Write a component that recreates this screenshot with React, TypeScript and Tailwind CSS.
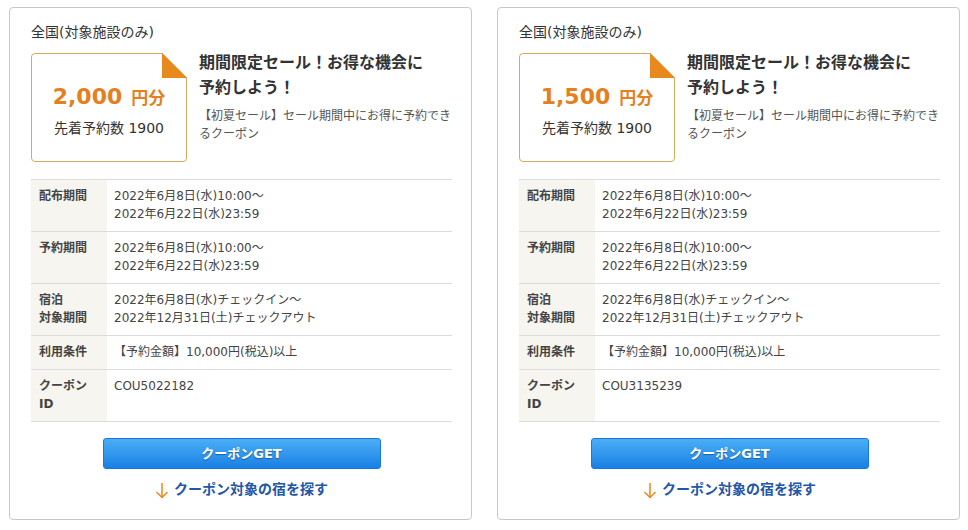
import React from "react";

type Coupon = { amount: string; id: string };

const FONT = { fontFamily: '"DejaVu Sans", "Noto Sans CJK JP", sans-serif' };

function Row({
  label,
  children,
  single,
}: {
  label: React.ReactNode;
  children: React.ReactNode;
  single?: boolean;
}) {
  const lh = single ? "leading-[17px]" : "leading-[17.5px]";
  return (
    <div className="flex border-b border-[#dcdcdc]">
      <div className={`w-[76px] shrink-0 bg-[#f7f5f0] pl-[8px] py-[8px] text-[12px] ${lh} font-bold text-[#444]`}>
        {label}
      </div>
      <div className={`flex-1 pl-[7px] py-[8px] text-[12px] ${lh} text-[#444]`}>{children}</div>
    </div>
  );
}

function Card({ c }: { c: Coupon }) {
  return (
    <div className="w-[463px] h-[513px] border border-[#c8c8c8] rounded-[4px] bg-white pl-[21px] pr-[18px] pt-[15px]">
      <div className="text-[14px] leading-[18px] text-[#333]">全国(対象施設のみ)</div>
      <div className="flex mt-[12px]">
        <div className="relative w-[156px] h-[109px] shrink-0">
          <div
            className="absolute inset-0 border border-[#d9a85a] rounded-[4px] bg-white"
            style={{ clipPath: "polygon(0 0, 131px 0, 156px 25px, 156px 100%, 0 100%)" }}
          />
          <svg className="absolute left-[131px] top-0" width="25" height="25" viewBox="0 0 25 25">
            <polygon points="0,0 0,25 25,25" fill="#e8891e" />
            <line x1="0" y1="0" x2="25" y2="25" stroke="#d9a85a" strokeWidth="1" />
          </svg>
          <div className="relative h-full flex flex-col items-center justify-center pt-[4px]">
            <div className="flex items-baseline text-[#e5801e] font-bold">
              <span className="text-[22px] leading-[28px]">{c.amount}</span>
              <span className="text-[17px] leading-[20px] ml-[9px]">円分</span>
            </div>
            <div className="text-[14px] leading-[18px] text-[#333] mt-[8px]">先着予約数 1900</div>
          </div>
        </div>
        <div className="ml-[12px] -mt-[3px]">
          <div className="text-[16px] leading-[25px] font-bold text-[#333]">
            期間限定セール！お得な機会に
            <br />
            予約しよう！
          </div>
          <div className="mt-[7px] text-[12px] leading-[18px] text-[#555]">
            【初夏セール】セール期間中にお得に予約でき
            <br />
            るクーポン
          </div>
        </div>
      </div>
      <div className="mt-[17px] w-[421px] border-t border-[#dcdcdc]">
        <Row label="配布期間">
          2022年6月8日(水)10:00～
          <br />
          2022年6月22日(水)23:59
        </Row>
        <Row label="予約期間">
          2022年6月8日(水)10:00～
          <br />
          2022年6月22日(水)23:59
        </Row>
        <Row
          label={
            <>
              宿泊
              <br />
              対象期間
            </>
          }
        >
          2022年6月8日(水)チェックイン～
          <br />
          2022年12月31日(土)チェックアウト
        </Row>
        <Row label="利用条件" single>
          【予約金額】10,000円(税込)以上
        </Row>
        <Row
          label={
            <>
              クーポン
              <br />
              ID
            </>
          }
        >
          {c.id}
        </Row>
      </div>
      <div className="w-[421px] flex flex-col items-center">
        <button className="mt-[16px] w-[278px] h-[31px] rounded-[3px] border border-[#1a78d6] bg-gradient-to-b from-[#4aaef6] to-[#1780e4] text-white text-[13px] font-bold [text-shadow:0_1px_1px_rgba(0,0,0,0.35)]">
          クーポンGET
        </button>
        <div className="mt-[9px] flex items-center text-[14px] leading-[20px] font-bold text-[#2356a8]">
          <svg width="14" height="17" viewBox="0 0 14 17" className="mr-[5px] mt-[4px]">
            <path d="M7 1 V15.5" stroke="#e8891e" strokeWidth="1.5" fill="none" />
            <path d="M1.5 10 L7 15.5 L12.5 10" stroke="#e8891e" strokeWidth="1.5" fill="none" />
          </svg>
          クーポン対象の宿を探す
        </div>
      </div>
    </div>
  );
}

export default function App() {
  const coupons: Coupon[] = [
    { amount: "2,000", id: "COU5022182" },
    { amount: "1,500", id: "COU3135239" },
  ];
  return (
    <div style={FONT} className="w-[968px] h-[530px] bg-white flex gap-[25px] pl-[9px] pt-[7px]">
      {coupons.map((c) => (
        <Card key={c.id} c={c} />
      ))}
    </div>
  );
}
